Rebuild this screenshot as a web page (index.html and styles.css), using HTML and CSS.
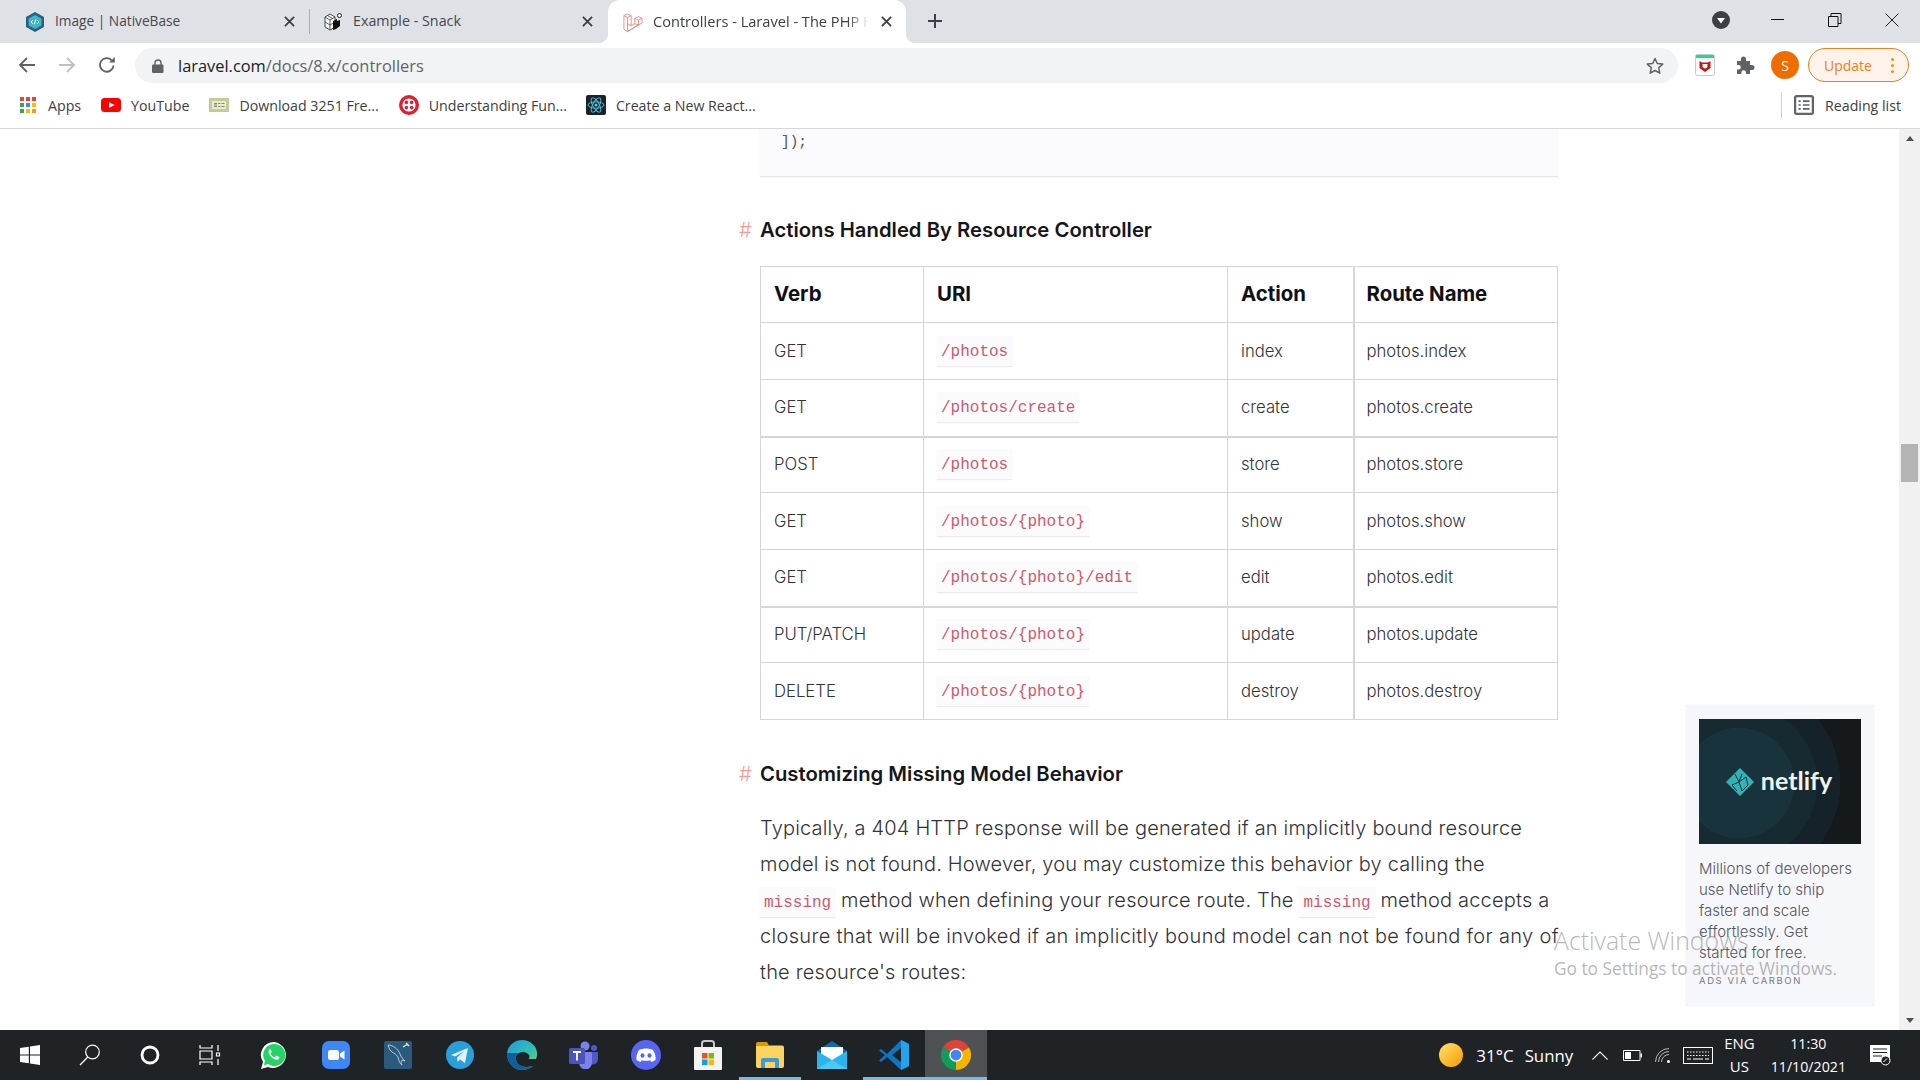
FILE: index.html
```html
<!DOCTYPE html>
<html lang="en">
<head>
  <meta charset="UTF-8">
  <title>Controllers - Laravel - The PHP Framework For Web Artisans</title>
  <link rel="stylesheet" href="styles.css">
</head>
<body>
  <!-- browser tabs -->
  <div class="tabstrip">
    <div class="tab tab-first">
      <svg class="fav" viewBox="0 0 18 20"><path d="M9 0l9 5v10l-9 5-9-5V5z" fill="#2b5f86"/><path d="M9 3l6.4 3.5v7L9 17l-6.4-3.5v-7z" fill="#3fb8c4"/><path d="M7 8l-2 2 2 2M11 8l2 2-2 2M9.7 7.6L8.3 12.4" stroke="#fff" stroke-width=".9" fill="none"/></svg>
      <span class="tab-title">Image | NativeBase</span>
      <svg class="tab-x" viewBox="0 0 12 12"><path d="M1 1l10 10M11 1L1 11"/></svg>
    </div>
    <div class="tab tab-second">
      <svg class="fav" viewBox="0 0 18 20"><path d="M1 5l5-3 5 3v10l-5 3-5-3z" fill="#fff" stroke="#333" stroke-width=".9"/><path d="M6 8v10M1 5l5 3 5-3M1 10l5 3 5-3M3.500 3.500l5 3" stroke="#333" stroke-width=".8" fill="none"/><path d="M9 9l4-2v2l3-1v6l-4 3-3 1z" fill="#111"/><circle cx="15.500" cy="3.500" r="2" fill="#fff" stroke="#222"/></svg>
      <span class="tab-title">Example - Snack</span>
      <svg class="tab-x" viewBox="0 0 12 12"><path d="M1 1l10 10M11 1L1 11"/></svg>
    </div>
    <div class="tab tab-active">
      <svg class="fav-wide" viewBox="0 0 22 22"><path d="M1 4l4-2 4 2v11l4-2V7l4-2 4 2v5L9 19l-4 2.500-4-2.500zM1 4l4 2 4-2M5 6v15M13 7l4 2 4-2M17 9v5M9 15l-4-2M13 13l4 1M5 21.500l12-7.500" fill="none" stroke="#f4786c" stroke-width=".9" stroke-linejoin="round"/></svg>
      <span class="tab-title tab-title-fade">Controllers - Laravel - The PHP Fr</span>
      <svg class="tab-x" viewBox="0 0 12 12"><path d="M1 1l10 10M11 1L1 11"/></svg>
    </div>
    <svg class="new-tab" viewBox="0 0 16 16"><path d="M8 1v14M1 8h14"/></svg>
    <div class="window-btns">
      <div class="win-cell"><svg width="18" height="18" viewBox="0 0 18 18"><circle cx="9" cy="9" r="9" fill="#3c4043"/><path d="M5 7h8l-4 5.500z" fill="#fff"/></svg></div>
      <div class="win-cell"><svg width="14" height="14" viewBox="0 0 14 14"><path d="M0 6.500h13" stroke="#111" fill="none"/></svg></div>
      <div class="win-cell"><svg width="14" height="14" viewBox="0 0 14 14"><path d="M.5 3.500h9.500v10H.5zM3 3.500V.5h10v10h-3" stroke="#111" fill="none"/></svg></div>
      <div class="win-cell"><svg width="14" height="14" viewBox="0 0 14 14"><path d="M.5.5l13 13M13.500.5l-13 13" stroke="#222" fill="none"/></svg></div>
    </div>
  </div>

  <!-- address bar -->
  <div class="toolbar">
    <div class="nav-btn"><svg viewBox="0 0 18 18" class="nav-icon"><path d="M17 9H2M9 2L2 9l7 7"/></svg></div>
    <div class="nav-btn"><svg viewBox="0 0 18 18" class="nav-icon nav-off"><path d="M1 9h15M9 2l7 7-7 7"/></svg></div>
    <div class="nav-btn"><svg viewBox="0 0 18 18" class="nav-icon"><path d="M15.500 9.500a6.800 6.800 0 1 1-1.800-5.200"/><path d="M16.800 1v5.600h-5.600z" class="nav-fill"/></svg></div>
    <div class="omnibox">
      <svg class="lock" viewBox="0 0 12 14"><path d="M3 6V4a3 3 0 0 1 6 0v2" fill="none" stroke="#5f6368" stroke-width="1.400"/><rect y="5.500" width="11.500" height="8.500" rx="1.200" fill="#5f6368"/></svg>
      <span class="url"><b class="url-host">laravel.com</b>/docs/8.x/controllers</span>
      <svg class="star" viewBox="0 0 18 18"><path d="M9 1.500l2.300 5 5.400.6-4 3.700 1.100 5.400L9 13.500l-4.800 2.700 1.100-5.400-4-3.700 5.400-.6z" fill="none" stroke="#5f6368" stroke-width="1.500" stroke-linejoin="round"/></svg>
    </div>
    <div class="ext-btn ext-first"><svg width="20" height="22" viewBox="0 0 20 22"><rect x=".5" y=".5" width="19" height="21" rx="2" fill="#fff" stroke="#c9c9c9"/><rect x="1" y="1" width="18" height="3" fill="#1fdc8c"/><path d="M4.500 7l2.500 1.500h6L15.500 7v7l-5.500 4-5.500-4z" fill="#c01818"/><path d="M7.500 10h5v3l-2.500 1.800-2.500-1.800z" fill="#fff"/></svg></div>
    <div class="ext-btn"><svg width="20" height="20" viewBox="0 0 20 20"><path d="M2 6h4V4a2.500 2.500 0 0 1 5 0v2h4v4h2a2.500 2.500 0 0 1 0 5h-2v4h-4v-1.500a2.300 2.300 0 0 0-4.600 0V19H2v-4.500h1.500a2.300 2.300 0 0 0 0-4.600H2z" fill="#5f6368"/></svg></div>
    <div class="ext-btn"><span class="avatar">S</span></div>
    <div class="update-pill"><span>Update</span><i class="update-dots"></i></div>
  </div>

  <!-- bookmarks -->
  <div class="bookmarks">
    <div class="bookmark">
      <svg class="bm-apps" viewBox="0 0 16 16"><rect width="4" height="4" fill="#ea4335"/><rect x="6" width="4" height="4" fill="#ea4335"/><rect x="12" width="4" height="4" fill="#ea4335"/><rect y="6" width="4" height="4" fill="#34a853"/><rect x="6" y="6" width="4" height="4" fill="#4285f4"/><rect x="12" y="6" width="4" height="4" fill="#fbbc04"/><rect y="12" width="4" height="4" fill="#34a853"/><rect x="6" y="12" width="4" height="4" fill="#fbbc04"/><rect x="12" y="12" width="4" height="4" fill="#f59e0b"/></svg>
      <span>Apps</span>
    </div>
    <div class="bookmark">
      <svg class="bm-icon" viewBox="0 0 20 14"><rect width="20" height="14" rx="3.500" fill="#f00"/><path d="M8 4l5.500 3L8 10z" fill="#fff"/></svg>
      <span>YouTube</span>
    </div>
    <div class="bookmark">
      <svg class="bm-icon" viewBox="0 0 20 14"><rect width="20" height="14" fill="#c6c99a"/><rect x="3" y="3" width="14" height="8" fill="#e9ead0"/><path d="M5 5.500h3M5 7h3M5 8.500h3M9 5.500h2.500M9 8.500h2.500M12.500 5.500h3M12.500 8.500h3" stroke="#8b8e62"/></svg>
      <span>Download 3251 Fre...</span>
    </div>
    <div class="bookmark">
      <svg class="bm-icon" viewBox="0 0 20 20"><circle cx="10" cy="10" r="8.300" fill="#fff" stroke="#e0202f" stroke-width="3.400"/><circle cx="7.400" cy="7.400" r="1.800" fill="#e0202f"/><circle cx="12.600" cy="7.400" r="1.800" fill="#e0202f"/><circle cx="7.400" cy="12.600" r="1.800" fill="#e0202f"/><circle cx="12.600" cy="12.600" r="1.800" fill="#e0202f"/></svg>
      <span>Understanding Fun...</span>
    </div>
    <div class="bookmark bookmark-react">
      <svg class="bm-icon" viewBox="0 0 20 20"><rect width="20" height="20" rx="2" fill="#1b2229"/><g fill="none" stroke="#54c7e4" stroke-width=".9"><ellipse cx="10" cy="10" rx="8" ry="3.200"/><ellipse cx="10" cy="10" rx="8" ry="3.200" transform="rotate(60 10 10)"/><ellipse cx="10" cy="10" rx="8" ry="3.200" transform="rotate(120 10 10)"/></g><circle cx="10" cy="10" r="1.600" fill="#54c7e4"/></svg>
      <span>Create a New React...</span>
    </div>
    <div class="reading-list">
      <svg class="bm-icon" viewBox="0 0 18 18"><rect x="1" y="1" width="16" height="16" rx="1.500" fill="none" stroke="#5f6368" stroke-width="2"/><path d="M4 5.500h2M8 5.500h6M4 9h2M8 9h6M4 12.500h2M8 12.500h6" stroke="#5f6368" stroke-width="1.400"/></svg>
      <span>Reading list</span>
    </div>
  </div>

  <!-- page -->
  <div class="viewport">
    <main class="doc">
      <pre class="code-block">]);</pre>

      <h2 class="doc-heading"><span class="hash">#</span>Actions Handled By Resource Controller</h2>

      <table class="routes">
        <colgroup>
          <col class="col-verb"><col class="col-uri"><col class="col-action"><col class="col-name">
        </colgroup>
        <thead>
          <tr class="row-short"><th>Verb</th><th>URI</th><th class="split">Action</th><th class="after-split">Route Name</th></tr>
        </thead>
        <tbody>
          <tr><td>GET</td><td><code>/photos</code></td><td class="split">index</td><td class="after-split">photos.index</td></tr>
          <tr class="row-thick"><td>GET</td><td><code>/photos/create</code></td><td class="split">create</td><td class="after-split">photos.create</td></tr>
          <tr class="row-short"><td>POST</td><td><code>/photos</code></td><td class="split">store</td><td class="after-split">photos.store</td></tr>
          <tr><td>GET</td><td><code>/photos/{photo}</code></td><td class="split">show</td><td class="after-split">photos.show</td></tr>
          <tr class="row-thick"><td>GET</td><td><code>/photos/{photo}/edit</code></td><td class="split">edit</td><td class="after-split">photos.edit</td></tr>
          <tr class="row-short"><td>PUT/PATCH</td><td><code>/photos/{photo}</code></td><td class="split">update</td><td class="after-split">photos.update</td></tr>
          <tr><td>DELETE</td><td><code>/photos/{photo}</code></td><td class="split">destroy</td><td class="after-split">photos.destroy</td></tr>
        </tbody>
      </table>

      <h2 class="doc-heading"><span class="hash">#</span>Customizing Missing Model Behavior</h2>

      <p class="doc-text">Typically, a 404 HTTP response will be generated if an implicitly bound resource<br>
      model is not found. However, you may customize this behavior by calling the<br>
      <code>missing</code> method when defining your resource route. The <code>missing</code> method accepts a<br>
      <span class="line-wide">closure that will be invoked if an implicitly bound model can not be found for any of</span><br>
      the resource's routes:</p>
    </main>

    <aside class="ad">
      <div class="ad-image">
        <svg class="ad-mark" viewBox="0 0 28 28"><path d="M14 0l14 14-14 14L0 14z" fill="#31b3b8"/><path d="M9 6l4 8-7 3M13 14l7-5M13 14l3 9M16 6l-3 8M20 9l2 8-6 6M6 17l5 6" stroke="#15303a" stroke-width="1" fill="none"/></svg>
        <span class="ad-logo">netlify</span>
      </div>
      <p class="ad-text">Millions of developers<br>use Netlify to ship<br>faster and scale<br>effortlessly. Get<br>started for free.</p>
      <div class="ad-via">ADS VIA CARBON</div>
    </aside>

    <div class="scrollbar">
      <i class="arrow-up"></i>
      <div class="thumb"></div>
      <i class="arrow-down"></i>
    </div>

    <div class="activate">
      <div class="activate-title">Activate Windows</div>
      <div class="activate-sub">Go to Settings to activate Windows.</div>
    </div>
  </div>

  <!-- windows taskbar -->
  <footer class="taskbar">
    <div class="task"><svg width="20" height="20" viewBox="0 0 20 20"><path d="M0 3l8.800-1.300v7.700H0zM10 1.500L20 0v9.400H10zM0 10.600h8.800v7.700L0 17zM10 10.600h10V20l-10-1.500z" fill="#fff"/></svg></div>
    <div class="task"><svg width="22" height="22" viewBox="0 0 22 22"><circle cx="13.500" cy="8" r="6.800" fill="none" stroke="#fff" stroke-width="1.200"/><path d="M8.800 13L1 21" stroke="#fff" stroke-width="1.300"/></svg></div>
    <div class="task"><svg width="20" height="20" viewBox="0 0 20 20"><circle cx="10" cy="10" r="8" fill="none" stroke="#fff" stroke-width="2.800"/></svg></div>
    <div class="task"><svg width="22" height="20" viewBox="0 0 22 20"><path d="M1 0v3h12V0M1 20v-3h12v3M1 6h12v8H1zM19 0v6M19 14v6M17.500 8h3v3h-3z" fill="none" stroke="#fff" stroke-width="1.200"/></svg></div>
    <div class="task task-apps"><svg width="28" height="28" viewBox="0 0 28 28"><path d="M14 1a13 13 0 0 0-11 20L1 28l7-2a13 13 0 1 0 6-25z" fill="#fff"/><path d="M14 3a11 11 0 0 0-9 17l-1.200 4.300 4.400-1.200A11 11 0 1 0 14 3z" fill="#25d366"/><path d="M10 8c-1.500 1-1.800 3-.6 5.300 1.500 2.900 4 5 6.500 5.500 1.700.3 3-.5 3.500-2 .1-.5 0-.7-.4-.9l-2.300-1.100c-.4-.2-.6-.1-.9.200l-.8 1c-.2.300-.5.300-.8.200-1.500-.7-2.700-1.800-3.500-3.300-.2-.3-.1-.5.100-.8l.7-.9c.2-.2.200-.4.100-.7l-1-2.300c-.2-.5-.5-.6-.9-.5z" fill="#fff"/></svg></div>
    <div class="task task-app"><svg width="28" height="28" viewBox="0 0 28 28"><rect width="28" height="28" rx="7" fill="#3f87f5"/><rect x="6" y="9" width="11" height="10" rx="2.200" fill="#fff"/><path d="M18 12.500l4.500-3v9l-4.500-3z" fill="#fff"/></svg></div>
    <div class="task task-app"><svg width="28" height="28" viewBox="0 0 28 28"><rect width="28" height="28" rx="2" fill="#2c5a7c"/><path d="M4 4c5 0 10 4 12 9 1 3 3 5 5 7l-3-1c-1 2-1 3 0 5-3-2-3-5-4-8-2-3-4-4-6-5-2-1-3-4-4-7z" fill="none" stroke="#c4d3dd" stroke-width=".9"/><path d="M19 6l5-3M22 2l3 3" stroke="#dfe8ee" stroke-width="1.400"/></svg></div>
    <div class="task task-app"><svg width="28" height="28" viewBox="0 0 28 28"><circle cx="14" cy="14" r="14" fill="#2a9fd8"/><path d="M5 14l17-7-3 15-5-3.500-2.500 2.500-.5-4.500 7-6-9 5z" fill="#e4f1f8"/></svg></div>
    <div class="task task-app"><svg width="30" height="30" viewBox="0 0 30 30"><defs><linearGradient id="edgeTop" x1="0" y1="0" x2="1" y2="1"><stop offset="0" stop-color="#1b9de2"/><stop offset=".6" stop-color="#34c1b0"/><stop offset="1" stop-color="#7ed957"/></linearGradient></defs><path d="M15 0C7 0 1 6 0 13c0 9 6 17 15 17 5 0 8-2 11-4-6 2-12 1-15-2-3-4-3-9 1-11 3-2 8-1 10 2 1 2 0 4-1 4h8c1-2 1-4 1-6C30 6 23 0 15 0z" fill="url(#edgeTop)"/><path d="M0 13c0 9 6 17 15 17 5 0 8-2 11-4-6 2-12 1-15-2-3-4-3-9 1-11-5 0-10 0-12 0z" fill="#0f5f9e"/></svg></div>
    <div class="task task-app"><svg width="30" height="28" viewBox="0 0 30 28"><circle cx="16" cy="5" r="4.500" fill="#7b83eb"/><circle cx="25" cy="7" r="3" fill="#5059c9"/><path d="M22 11h7v8a5 5 0 0 1-7 4z" fill="#5059c9"/><path d="M10 11h13v11a6 6 0 0 1-13 0z" fill="#7b83eb"/><rect y="7" width="16" height="16" rx="1.500" fill="#4b53bc"/><path d="M4 11h8M8 11v8.500" stroke="#fff" stroke-width="1.800"/></svg></div>
    <div class="task task-app"><svg width="30" height="30" viewBox="0 0 30 30"><circle cx="15" cy="15" r="15" fill="#5865f2"/><path d="M8 10c4-2 10-2 14 0 2 3 3 7 2.500 10-1.500 1-3 1.700-4.300 2l-1-1.800c-2.700.8-5.700.8-8.400 0l-1 1.800c-1.300-.3-2.800-1-4.300-2C5 17 6 13 8 10z" fill="#fff"/><ellipse cx="11.500" cy="15.500" rx="2" ry="2.200" fill="#5865f2"/><ellipse cx="18.500" cy="15.500" rx="2" ry="2.200" fill="#5865f2"/></svg></div>
    <div class="task task-app"><svg width="30" height="30" viewBox="0 0 30 30"><path d="M9 9V3.500Q9 1 11.500 1h7Q21 1 21 3.500V9" fill="none" stroke="#c8c8c8" stroke-width="2"/><rect x="1" y="7" width="28" height="23" rx="1" fill="#f3f3f3"/><rect x="9" y="13" width="5.500" height="5.500" fill="#f25022"/><rect x="15.500" y="13" width="5.500" height="5.500" fill="#7fba00"/><rect x="9" y="19.500" width="5.500" height="5.500" fill="#00a4ef"/><rect x="15.500" y="19.500" width="5.500" height="5.500" fill="#ffb900"/></svg></div>
    <div class="task task-app task-open"><svg width="28" height="26" viewBox="0 0 28 26"><path d="M0 2a2 2 0 0 1 2-2h9l2 3.500H0z" fill="#d99a07"/><path d="M0 3.500h26a2 2 0 0 1 2 2V24a2 2 0 0 1-2 2H2a2 2 0 0 1-2-2z" fill="#fbd35f"/><path d="M5 26v-8a2 2 0 0 1 2-2h14a2 2 0 0 1 2 2v8h-4v-6H9v6z" fill="#3d99d8"/></svg></div>
    <div class="task task-app"><svg width="30" height="28" viewBox="0 0 30 28"><path d="M15 0L0 10v18h30V10z" fill="#0d6bb3"/><path d="M4 6h22v9l-11 6-11-6z" fill="#fff"/><path d="M0 10l15 9 15-9v18H0z" fill="#29b6ee"/><path d="M0 28l15-9 15 9z" fill="#50c8f5"/></svg></div>
    <div class="task task-app task-on"><svg width="30" height="30" viewBox="0 0 30 30"><path d="M22 0l8 4v22l-8 4-14-13-6 5-2-1.500L6 15 0 10.500 2 9l6 5z" fill="#0a76c4"/><path d="M22 0l8 4v22l-8 4z" fill="#22a3ec"/><path d="M22 8v14l-9-7z" fill="#202326"/></svg></div>
    <div class="task task-app task-on task-chrome"><svg width="30" height="30" viewBox="0 0 24 24"><path d="M12 12L1.600 6A12 12 0 0 1 22.400 6z" fill="#db4437"/><path d="M12 12l10.400-6A12 12 0 0 1 12 24z" fill="#f4b400"/><path d="M12 12v12A12 12 0 0 1 1.600 6z" fill="#0f9d58"/><circle cx="12" cy="12" r="5.400" fill="#fff"/><circle cx="12" cy="12" r="4.300" fill="#4285f4"/></svg></div>

    <div class="tray">
      <i class="sun"></i>
      <span class="weather">31°C</span>
      <span class="weather weather-word">Sunny</span>
      <svg class="tray-chevron" width="16" height="9" viewBox="0 0 16 9"><path d="M.5 8.500L8 1l7.500 7.500" fill="none" stroke="#fff" stroke-width="1.100"/></svg>
      <svg class="tray-battery" width="19" height="11" viewBox="0 0 19 11"><path d="M.5.500h16.500v10H.5z" fill="none" stroke="#fff"/><rect x="2" y="2" width="6" height="7" fill="#fff"/><rect x="17.500" y="3.500" width="1.500" height="4" fill="#fff"/></svg>
      <svg class="tray-wifi" width="16" height="15" viewBox="0 0 16 15"><path d="M.5 14A13.500 13.500 0 0 1 14 .5M3.500 14A10.500 10.500 0 0 1 14 3.500M6.500 14A7.500 7.500 0 0 1 14 6.500" fill="none" stroke="#ccc" stroke-width=".9"/><circle cx="13.500" cy="13.500" r="1.500" fill="#fff"/></svg>
      <svg class="tray-keys" width="30" height="17" viewBox="0 0 30 17"><rect x=".5" y=".5" width="29" height="16" fill="none" stroke="#fff"/><path d="M4 5h22M4 8.500h22" stroke="#fff" stroke-dasharray="1.500 1.500"/><path d="M4 12h4M10 12h10M22 12h4" stroke="#fff"/></svg>
      <div class="tray-lang"><span>ENG</span><span>US</span></div>
      <div class="tray-clock"><span>11:30</span><span>11/10/2021</span></div>
      <svg class="tray-notes" width="21" height="21" viewBox="0 0 21 21"><path d="M0 0h20v17H0z" fill="#fff"/><path d="M3 4h14M3 7.500h14M3 11h9" stroke="#202326" stroke-width="1.100"/><circle cx="15.500" cy="15.500" r="4.500" fill="#202326" stroke="#fff"/><path d="M13.500 17l3.500-3.500" stroke="#fff"/></svg>
    </div>
  </footer>
</body>
</html>
```
FILE: styles.css
```css
* {
  box-sizing: border-box;
}

html, body {
  margin: 0;
  height: 100%;
  overflow: hidden;
}

body {
  width: 1920px;
  height: 1080px;
  display: flex;
  flex-direction: column;
  background: #fff;
  font-family: "Open Sans", sans-serif;
}

/* tabs */
.tabstrip {
  height: 43px;
  display: flex;
  background: #dee1e6;
  flex: none;
}

.tab {
  position: relative;
  height: 43px;
  display: flex;
  align-items: center;
  color: #45494f;
  font-size: 14px;
}

.tab-first {
  width: 310px;
  padding: 0 15px 0 26px;
  font-size: 13.700px;
}

.tab-first::after {
  content: "";
  position: absolute;
  right: 0;
  top: 9px;
  height: 25px;
  border-right: 1px solid #a9acb1;
}

.tab-second {
  width: 298px;
  padding: 0 15px 0 14px;
  font-size: 14.300px;
}

.tab-active {
  width: 298px;
  padding: 0 14px 0 15px;
  background: #fff;
  border-radius: 12px 12px 0 0;
  color: #3c4043;
  font-size: 14.600px;
}

.tab-active::before,
.tab-active::after {
  content: "";
  position: absolute;
  bottom: 0;
  width: 10px;
  height: 10px;
}

.tab-active::before {
  left: -10px;
  background: radial-gradient(circle at 0 0, transparent 10px, #fff 10.5px);
}

.tab-active::after {
  right: -10px;
  background: radial-gradient(circle at 100% 0, transparent 10px, #fff 10.5px);
}

.fav {
  width: 18px;
  height: 20px;
  flex: none;
  margin-right: 11px;
}

.fav-wide {
  width: 20px;
  height: 22px;
  flex: none;
  margin-right: 10px;
}

.tab-title {
  flex: 1;
  min-width: 0;
  margin-bottom: 2px;
  white-space: nowrap;
}

.tab-title-fade {
  -webkit-mask-image: linear-gradient(to right, #000 90%, transparent 100%);
  mask-image: linear-gradient(to right, #000 90%, transparent 100%);
}

.tab-x {
  width: 11px;
  height: 11px;
  flex: none;
  margin-left: 12px;
  fill: none;
  stroke: #3c4043;
  stroke-width: 2;
}

.new-tab {
  width: 16px;
  height: 16px;
  margin: 13px 0 0 21px;
  fill: none;
  stroke: #3c4043;
  stroke-width: 2;
}

.window-btns {
  margin-left: auto;
  display: flex;
}

.win-cell {
  width: 57px;
  height: 43px;
  display: flex;
  align-items: center;
  justify-content: center;
  padding-bottom: 4px;
}

/* address bar */
.toolbar {
  height: 43px;
  flex: none;
  display: flex;
  align-items: center;
  padding-left: 7px;
  background: #fff;
}

.nav-btn {
  width: 40px;
  display: flex;
  justify-content: center;
}

.nav-icon {
  width: 18px;
  height: 18px;
  fill: none;
  stroke: #5f6368;
  stroke-width: 1.800;
}

.nav-off {
  stroke: #bdc1c6;
}

.nav-fill {
  fill: #5f6368;
  stroke: none;
}

.omnibox {
  width: 1543px;
  height: 35px;
  margin: 2px 0 0 8px;
  padding: 0 8px 0 17px;
  display: flex;
  align-items: center;
  background: #f1f3f4;
  border-radius: 18px;
}

.lock {
  width: 12px;
  height: 14px;
  margin-right: 14px;
}

.url {
  flex: 1;
  font-size: 16.400px;
  color: #5f6368;
  padding-bottom: 1px;
}

.url-host {
  font-weight: 400;
  color: #202124;
}

.star {
  width: 18px;
  height: 18px;
  margin-right: 6px;
}

.ext-btn {
  width: 40px;
  display: flex;
  justify-content: center;
  margin-top: 1px;
}

.ext-first {
  margin-left: 7px;
}

.avatar {
  width: 28px;
  height: 28px;
  border-radius: 50%;
  background: #ef6c00;
  color: #fff;
  font-size: 14px;
  display: flex;
  align-items: center;
  justify-content: center;
}

.update-pill {
  width: 101px;
  height: 34px;
  margin: 1px 0 0 3px;
  padding: 0 14px 0 15px;
  display: flex;
  align-items: center;
  justify-content: space-between;
  background: #fdf3ea;
  border: 1px solid #e8811f;
  border-radius: 17px;
  color: #e8811f;
  font-size: 14px;
}

.update-dots {
  width: 3px;
  height: 3px;
  border-radius: 50%;
  background: #f29900;
  box-shadow: 0 -6px 0 #f29900, 0 6px 0 #f29900;
}

/* bookmarks */
.bookmarks {
  height: 43px;
  flex: none;
  display: flex;
  align-items: center;
  gap: 20px;
  padding: 0 19px 4px 20px;
  border-bottom: 1px solid #d8d8d8;
  font-size: 14.200px;
  color: #3c4043;
}

.bookmark {
  display: flex;
  align-items: center;
  gap: 10px;
  white-space: nowrap;
}

.bookmark-react {
  margin-left: -1px;
}

.bm-apps {
  width: 16px;
  height: 16px;
  margin-right: 2px;
}

.bm-icon {
  width: 20px;
  height: 20px;
  flex: none;
}

.reading-list {
  margin-left: auto;
  height: 26px;
  padding-left: 12px;
  border-left: 1px solid #d0d0d0;
  display: flex;
  align-items: center;
  gap: 11px;
  white-space: nowrap;
}

/* page */
.viewport {
  position: relative;
  flex: 1;
  min-height: 0;
  display: flex;
  background: #fff;
}

.doc {
  width: 1558px;
  flex: none;
  padding-left: 760px;
  font-family: Inter, sans-serif;
  color: #2f2f35;
}

.code-block {
  height: 47px;
  margin: 0;
  padding: 5px 21px;
  background: #fafafc;
  box-shadow: 0 1px 1px rgba(0, 0, 0, 0.1);
  font: 14.400px/17px "Liberation Mono", monospace;
  color: #555;
}

.doc-heading {
  height: 30px;
  margin: 39px 0 21px;
  font-size: 20.300px;
  line-height: 30px;
  font-weight: 600;
  color: #16161a;
  white-space: nowrap;
}

.hash {
  display: inline-block;
  width: 21px;
  margin-left: -21px;
  color: #fb9a93;
  font-weight: 300;
}

.routes {
  width: 797px;
  border-collapse: collapse;
  table-layout: fixed;
  font-size: 16.700px;
}

.col-verb { width: 163px; }
.col-uri { width: 304px; }
.col-action { width: 126px; }
.col-name { width: 204px; }

.routes tr {
  height: 57px;
}

.routes .row-short {
  height: 56px;
}

.routes .row-thick {
  border-bottom: 2px solid #d5d5da;
}

.routes th,
.routes td {
  padding: 0 13px 1px;
  border: 1px solid #d5d5da;
  text-align: left;
  color: #33333a;
  font-weight: 300;
}

.routes th {
  padding-bottom: 2px;
  font-size: 20.400px;
  font-weight: 700;
  color: #101014;
}

.routes .split {
  border-right-width: 2px;
}

.routes .after-split {
  padding-left: 12px;
}

code {
  display: inline-block;
  padding: 2px 4px 0;
  background: #fbfbfd;
  box-shadow: 0 1px 1px rgba(0, 0, 0, 0.08);
  font: 16px/28px "Liberation Mono", monospace;
  letter-spacing: 0;
  color: #cf5a6a;
}

.doc-text {
  margin: 19px 0 0;
  white-space: nowrap;
  font-size: 20px;
  letter-spacing: 0.18px;
  line-height: 36px;
  font-weight: 300;
  color: #33333a;
}

.line-wide {
  letter-spacing: 0.33px;
}

.ad {
  width: 188px;
  height: 301px;
  flex: none;
  align-self: flex-end;
  margin: 0 0 24px 128px;
  padding: 14px 13px;
  background: #f6f7fb;
  border-radius: 2px;
  box-shadow: 0 0 1px rgba(0, 0, 0, 0.2);
}

.ad-image {
  height: 125px;
  display: flex;
  align-items: center;
  justify-content: center;
  gap: 7px;
  padding-right: 2px;
  background: radial-gradient(circle at 40px 64px, #18333c 0 55px, #172a31 55.500px 78px, #16222a 78.500px 101px, #15191c 101.500px);
}

.ad-mark {
  width: 28px;
  height: 28px;
}

.ad-logo {
  font: 700 25px/1 Lato, sans-serif;
  color: #f1f3f3;
  padding-bottom: 2px;
}

.ad-text {
  margin: 14px 0 0;
  font: 300 15px/21px Inter, sans-serif;
  color: #55555e;
}

.ad-via {
  margin-top: 12px;
  font: 400 9.500px/12px Inter, sans-serif;
  letter-spacing: 1.600px;
  color: #77777f;
}

.scrollbar {
  width: 21px;
  flex: none;
  margin-left: auto;
  display: flex;
  flex-direction: column;
  align-items: center;
  background: #f1f1f1;
}

.arrow-up,
.arrow-down {
  width: 0;
  height: 0;
  border: 4.500px solid transparent;
}

.arrow-up {
  margin-top: 7px;
  border-bottom: 5px solid #505050;
  border-top-width: 0;
}

.arrow-down {
  margin-top: auto;
  margin-bottom: 7px;
  border-top: 5px solid #505050;
  border-bottom-width: 0;
}

.thumb {
  width: 17px;
  height: 38px;
  margin-top: 303px;
  background: #b4b4b4;
}

.activate {
  position: absolute;
  left: 1554px;
  top: 794px;
  font-family: "Open Sans", sans-serif;
  color: rgba(120, 120, 120, 0.55);
  white-space: nowrap;
  pointer-events: none;
}

.activate-title {
  font-size: 24.800px;
  font-weight: 300;
  line-height: 34px;
}

.activate-sub {
  font-size: 17.300px;
  line-height: 24px;
}

/* windows taskbar */
.taskbar {
  height: 50px;
  flex: none;
  display: flex;
  background: #202326;
}

.task {
  width: 60px;
  display: flex;
  align-items: center;
  justify-content: center;
}

.task-apps {
  width: 62px;
  margin-left: 3px;
}

.task-app {
  width: 62px;
}

.task-open {
  box-shadow: inset 0 -3px 0 #76b9ed;
  background-clip: content-box;
}

.task-on {
  box-shadow: inset 0 -3px 0 #76b9ed;
}

.task-chrome {
  background: #4f5255;
}

.tray {
  margin-left: auto;
  display: flex;
  align-items: center;
  color: #fff;
  font-size: 16px;
  white-space: nowrap;
}

.sun {
  width: 24px;
  height: 24px;
  border-radius: 50%;
  background: linear-gradient(135deg, #ffe26a, #f59b00);
}

.weather {
  margin-left: 13px;
  font-size: 17px;
}

.weather-word {
  margin-left: 11px;
  font-size: 16.800px;
}

.tray-chevron {
  margin-left: 19px;
}

.tray-battery {
  margin-left: 15px;
}

.tray-wifi {
  margin-left: 13px;
}

.tray-keys {
  margin-left: 12px;
}

.tray-lang,
.tray-clock {
  display: flex;
  flex-direction: column;
  align-items: center;
  line-height: 23px;
  font-size: 15px;
}

.tray-lang {
  margin-left: 11px;
}

.tray-clock {
  margin-left: 16px;
  font-size: 14.200px;
}

.tray-notes {
  margin: 0 29px 0 24px;
}
```
